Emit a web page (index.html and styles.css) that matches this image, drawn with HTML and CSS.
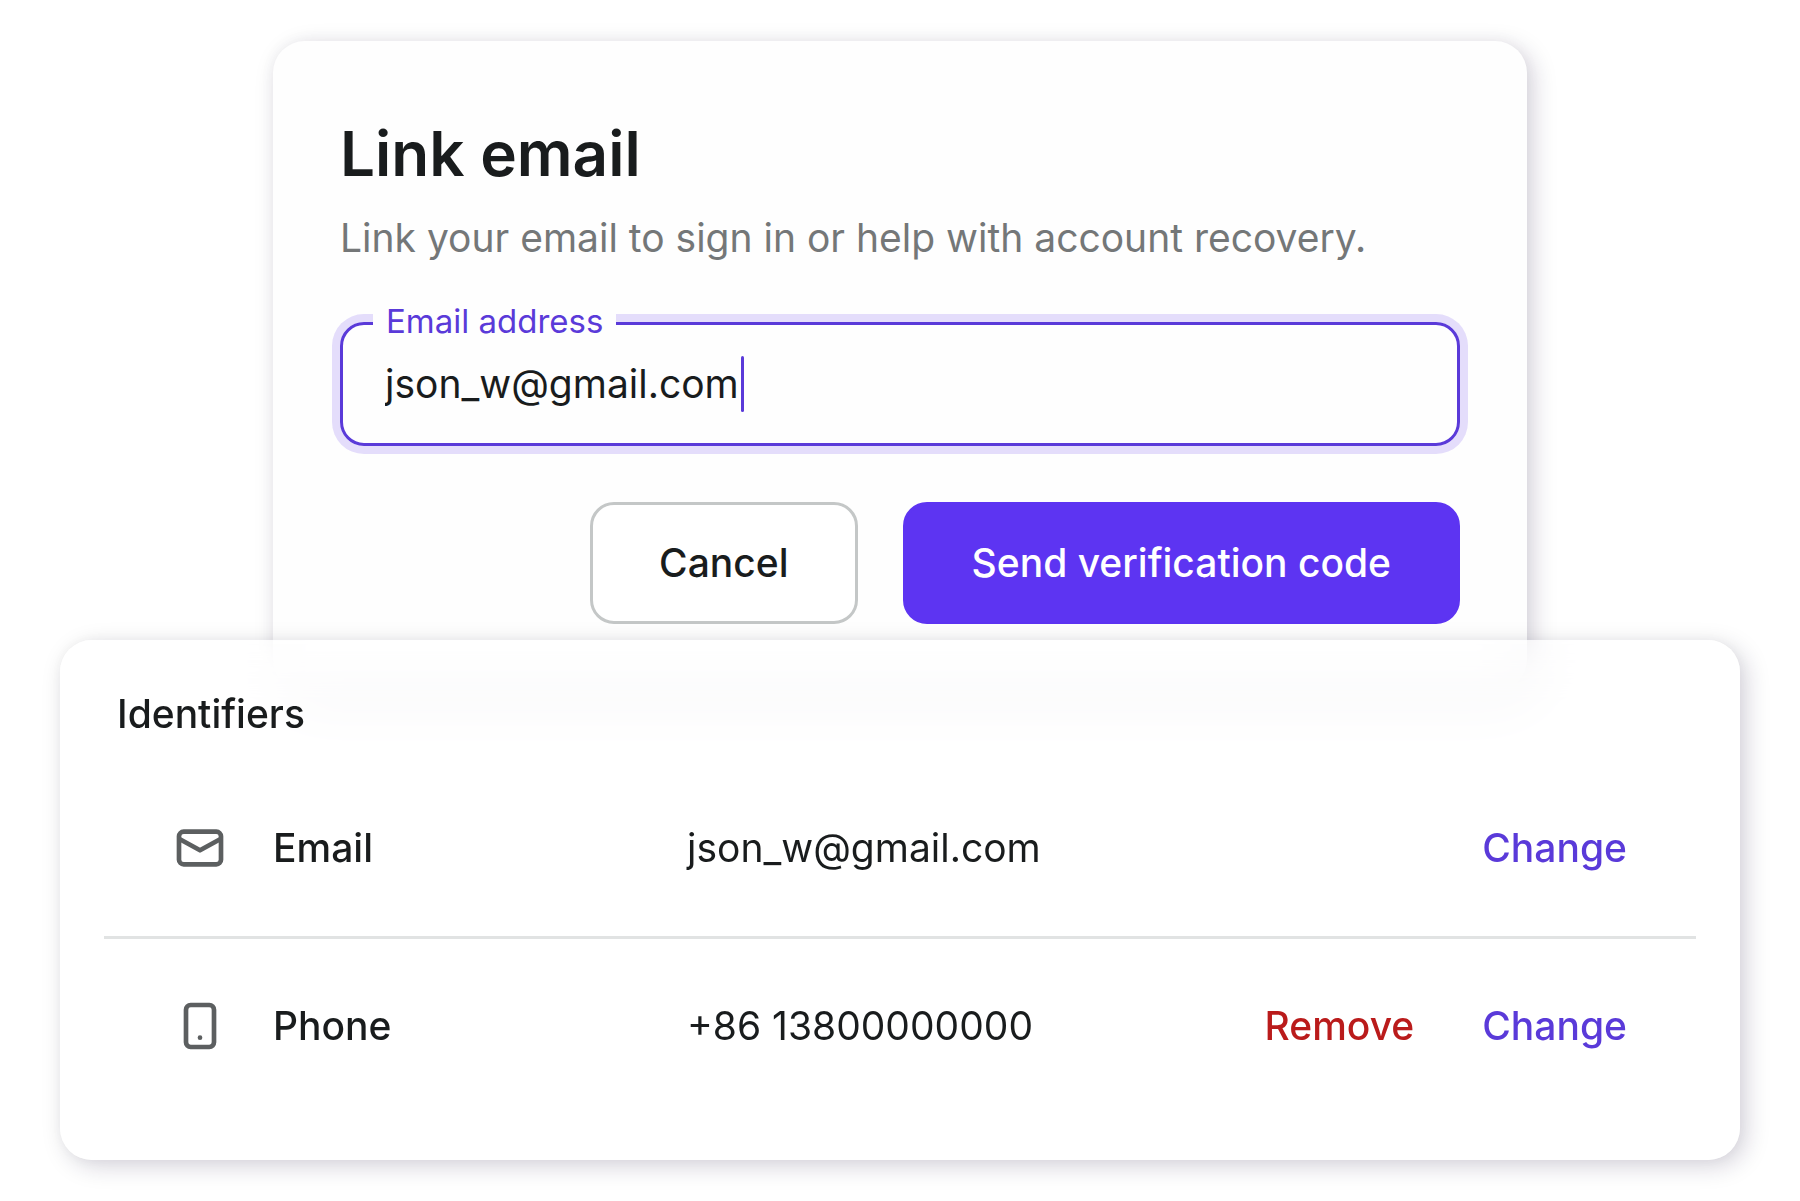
FILE: index.html
```html
<!DOCTYPE html>
<html lang="en">
<head>
    <meta charset="UTF-8">
    <meta name="viewport" content="width=device-width, initial-scale=1.0">
    <title>Link email</title>
    <link rel="stylesheet" href="styles.css">
</head>
<body>
    <main class="page">
        <form class="dialog">
            <h1>Link email</h1>
            <p class="subtitle">Link your email to sign in or help with account recovery.</p>

            <div class="field">
                <label for="email">Email address</label>
                <input type="text" id="email" value="json_w@gmail.com" autocomplete="off" spellcheck="false">
                <span class="caret"></span>
            </div>

            <div class="buttons">
                <button type="button" class="cancel">Cancel</button>
                <button type="submit" class="primary">Send verification code</button>
            </div>
        </form>

        <section class="card">
            <h2>Identifiers</h2>
            <table>
                <tr>
                    <th scope="row">
                        <div class="identifier">
                            <svg class="icon" viewBox="0 0 24 24" aria-hidden="true">
                                <rect x="3" y="5" width="18" height="14" rx="2"/>
                                <path d="M3 8l9 5 9-5"/>
                            </svg>
                            Email
                        </div>
                    </th>
                    <td>json_w@gmail.com</td>
                    <td>
                        <div class="actions">
                            <button type="button" class="link">Change</button>
                        </div>
                    </td>
                </tr>
                <tr>
                    <th scope="row">
                        <div class="identifier">
                            <svg class="icon" viewBox="0 0 24 24" aria-hidden="true">
                                <rect x="6" y="3" width="12" height="18" rx="2"/>
                                <circle class="dot" cx="12" cy="17" r="1"/>
                            </svg>
                            Phone
                        </div>
                    </th>
                    <td>+86 13800000000</td>
                    <td>
                        <div class="actions">
                            <button type="button" class="link danger">Remove</button>
                            <button type="button" class="link">Change</button>
                        </div>
                    </td>
                </tr>
            </table>
        </section>
    </main>
</body>
</html>
```

FILE: styles.css
```css
* {
    box-sizing: border-box;
}

body {
    margin: 0;
    background: #fff;
    color: #191c1d;
    font-family: Inter, "Liberation Sans", sans-serif;
    font-size: 39px;
    line-height: 60px;
}

.page {
    padding: 41px 60px 40px;
}

.dialog,
.card {
    border-radius: 32px;
    box-shadow: 0 0 16px rgba(0, 0, 0, 0.04), 6px 6px 24px rgba(25, 10, 60, 0.18);
}

.dialog {
    margin: 0 213px;
    padding: 67px;
    background: #fefefe;
}

h1 {
    margin: 0 0 8px;
    font-size: 62px;
    font-weight: 600;
    line-height: 92px;
}

.subtitle {
    margin: 0 0 54px;
    color: #747778;
}

.field {
    position: relative;
    display: flex;
    align-items: center;
    gap: 2px;
    height: 124px;
    padding: 0 42px;
    border: 3px solid #5a3ad9;
    border-radius: 24px;
    box-shadow: 0 0 0 8px #e4ddfb;
}

/* sits on the top border and hides it behind the text */
.field label {
    position: absolute;
    top: -25px;
    left: 30px;
    padding: 0 13px;
    background: #fefefe;
    color: #5a3ad9;
    font-size: 33px;
    line-height: 42px;
}

.field input {
    field-sizing: content;
    min-width: 0;
    padding: 0;
    border: none;
    outline: none;
    background: none;
    color: inherit;
    font: inherit;
}

.caret {
    width: 3px;
    height: 56px;
    border-radius: 2px;
    background: #5a3ad9;
}

.buttons {
    display: flex;
    justify-content: flex-end;
    gap: 45px;
    margin-top: 56px;
}

button {
    font: inherit;
    font-weight: 500;
    cursor: pointer;
}

.cancel,
.primary {
    padding: 28px 66px;
    border: 3px solid #c4c7c7;
    border-radius: 24px;
    background: #fff;
    color: #191c1d;
}

.primary {
    border-color: #5d34f2;
    background: #5d34f2;
    color: #fff;
}

.card {
    position: relative;
    margin-top: -51px;
    padding: 44px 44px 46px;
    background: rgba(255, 255, 255, 0.5);
    backdrop-filter: blur(24px);
}

h2 {
    margin: 0 0 16px;
    padding-left: 13px;
    font-size: 39px;
    font-weight: 500;
}

table {
    width: 100%;
    border-collapse: collapse;
}

th,
td {
    height: 177px;
    padding: 0;
    text-align: left;
}

th {
    width: 583px;
    font-weight: 500;
}

tr + tr {
    border-top: 3px solid #e1e3e3;
}

.identifier {
    display: flex;
    align-items: center;
    gap: 45px;
    padding-left: 68px;
}

.icon {
    width: 56px;
    height: 56px;
    fill: none;
    stroke: #5c5f60;
    stroke-width: 2;
    stroke-linejoin: round;
}

.icon .dot {
    fill: #5c5f60;
    stroke: none;
}

.actions {
    display: flex;
    justify-content: flex-end;
    gap: 68px;
    padding-right: 69px;
}

.link {
    padding: 0;
    border: none;
    background: none;
    color: #5a3ad9;
}

.link.danger {
    color: #ba1b1b;
}
```
